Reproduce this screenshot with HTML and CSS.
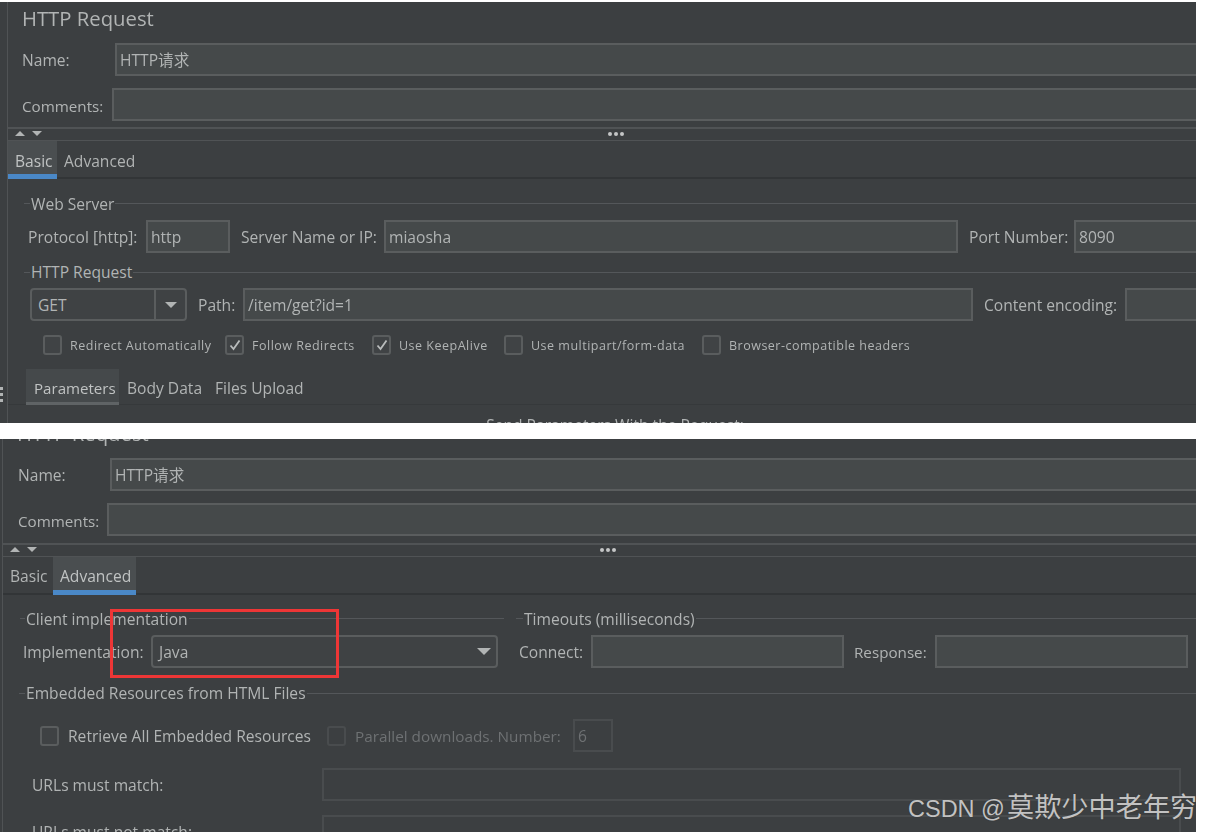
FILE: index.html
```html
<!DOCTYPE html>
<html lang="en">
<head>
<meta charset="utf-8">
<title>HTTP Request</title>
<link rel="stylesheet" href="styles.css">
</head>
<body>
<main class="page">
  <section class="panel panel-basic">
    <div class="grip"><i></i><i></i><i></i></div>
    <div class="inner">
      <h1 class="title">HTTP Request</h1>
      <div class="name-row">
        <label class="lbl">Name:</label>
        <div class="field open">HTTP请求</div>
      </div>
      <div class="comment-row">
        <label class="lbl">Comments:</label>
        <div class="field open"></div>
      </div>
      <div class="splitter">
        <svg class="arrows" width="28" height="7" viewBox="0 0 28 7"><path d="M0 6 5 1 10 6Z"/><path d="M17 1H27L22 6Z"/></svg>
        <div class="dots"><i></i><i></i><i></i></div>
      </div>
      <div class="tabs">
        <div class="tab active">Basic</div>
        <div class="tab">Advanced</div>
      </div>
      <div class="legend legend-server"><span>Web Server</span></div>
      <div class="server-row">
        <label class="lbl">Protocol [http]:</label>
        <div class="field">http</div>
        <label class="lbl lbl-gap">Server Name or IP:</label>
        <div class="field">miaosha</div>
        <label class="lbl lbl-gap">Port Number:</label>
        <div class="field open">8090</div>
      </div>
      <div class="legend legend-request"><span>HTTP Request</span></div>
      <div class="path-row">
        <div class="select method"><span class="select-value">GET</span><span class="select-btn"><svg width="12" height="6" viewBox="0 0 12 6"><path d="M0 0H12L6 6Z"/></svg></span></div>
        <label class="lbl lbl-gap">Path:</label>
        <div class="field">/item/get?id=1</div>
        <label class="lbl lbl-gap">Content encoding:</label>
        <div class="field open"></div>
      </div>
      <div class="checks">
        <div class="check check-a"><span class="box"></span>Redirect Automatically</div>
        <div class="check check-b"><span class="box"><svg width="14" height="14" viewBox="0 0 14 14"><path d="M2.5 7.5 5.5 11 11.5 2.5"/></svg></span>Follow Redirects</div>
        <div class="check check-c"><span class="box"><svg width="14" height="14" viewBox="0 0 14 14"><path d="M2.5 7.5 5.5 11 11.5 2.5"/></svg></span>Use KeepAlive</div>
        <div class="check check-d"><span class="box"></span>Use multipart/form-data</div>
        <div class="check"><span class="box"></span>Browser-compatible headers</div>
      </div>
      <div class="subtabs">
        <div class="subtab active">Parameters</div>
        <div class="subtab">Body Data</div>
        <div class="subtab">Files Upload</div>
      </div>
      <div class="send">Send Parameters With the Request:</div>
    </div>
  </section>

  <section class="panel panel-advanced">
    <div class="inner">
      <h1 class="title">HTTP Request</h1>
      <div class="name-row">
        <label class="lbl">Name:</label>
        <div class="field open">HTTP请求</div>
      </div>
      <div class="comment-row">
        <label class="lbl">Comments:</label>
        <div class="field open"></div>
      </div>
      <div class="splitter">
        <svg class="arrows" width="28" height="7" viewBox="0 0 28 7"><path d="M0 6 5 1 10 6Z"/><path d="M17 1H27L22 6Z"/></svg>
        <div class="dots"><i></i><i></i><i></i></div>
      </div>
      <div class="tabs">
        <div class="tab">Basic</div>
        <div class="tab active">Advanced</div>
      </div>
      <div class="legend-pair">
        <div class="legend"><span>Client implementation</span></div>
        <div class="legend"><span>Timeouts (milliseconds)</span></div>
      </div>
      <div class="impl-row">
        <label class="lbl">Implementation:</label>
        <div class="select"><span class="select-value">Java</span><svg class="java-arrow" width="14" height="7" viewBox="0 0 14 7"><path d="M0 0H14L7 7Z"/></svg></div>
        <label class="lbl lbl-wide">Connect:</label>
        <div class="field"></div>
        <label class="lbl lbl-response">Response:</label>
        <div class="field"></div>
      </div>
      <div class="legend legend-embedded"><span>Embedded Resources from HTML Files</span></div>
      <div class="retrieve-row">
        <div class="check check-large"><span class="box"></span>Retrieve All Embedded Resources</div>
        <div class="check check-large disabled"><span class="box"></span>Parallel downloads. Number:</div>
        <div class="field dim">6</div>
      </div>
      <div class="url-row">
        <label class="lbl">URLs must match:</label>
        <div class="field dim"></div>
      </div>
      <div class="url-row url-row-last">
        <label class="lbl">URLs must not match:</label>
        <div class="field dim"></div>
      </div>
    </div>
    <div class="highlight"></div>
    <div class="watermark">CSDN @<span class="watermark-cjk">莫欺少中老年穷</span></div>
  </section>
</main>
</body>
</html>
```
FILE: styles.css
```css
* { box-sizing: border-box; }
html, body { margin: 0; height: 100%; overflow: hidden; background: #fff; }
body {
  font-family: "Open Sans", "Noto Sans CJK SC", sans-serif;
  font-size: 15.6px;
  color: #b1b4b4;
}
.page { width: 1196px; padding-top: 2px; }
.panel { position: relative; overflow: hidden; background: #3c3f41; }
.panel-basic { height: 421px; padding-left: 7px; }
.panel-advanced { height: 393px; margin-top: 16px; padding-left: 2px; }
.inner { display: flow-root; height: 100%; border-left: 1px solid #505355; filter: blur(0.35px); }

.title { margin: 0 0 5px; height: 36px; line-height: 32px; padding-left: 14px; font-size: 20.3px; font-weight: 400; color: #b1b4b4; }
.panel-advanced .title { margin-top: -22px; }

.lbl { display: block; white-space: nowrap; line-height: 34px; }
.lbl-gap { padding-left: 11px; }
.lbl-wide { padding-left: 21px; }
.lbl-response { padding-left: 10px; font-size: 15.2px; }
.field {
  height: 33px; line-height: 31px; padding-left: 3px;
  background: #45494a; border: 2px solid #5a5d5e;
  white-space: nowrap; overflow: hidden;
}
.field.open { border-right: 0; }
.field.dim { background: transparent; border-color: #494c4e; color: #6e7173; }

.name-row, .comment-row { display: grid; height: 33px; }
.comment-row .lbl { line-height: 36px; font-size: 15.2px; }
.panel-basic .name-row { grid-template-columns: 93px 1fr; padding-left: 14px; }
.panel-basic .comment-row { grid-template-columns: 90px 1fr; padding-left: 14px; margin-top: 12px; }
.panel-advanced .name-row { grid-template-columns: 92px 1fr; padding-left: 15px; }
.panel-advanced .comment-row { grid-template-columns: 89px 1fr; padding-left: 15px; margin-top: 12px; }

.splitter {
  position: relative; height: 14px; margin-top: 6px;
  border-top: 2px solid #505355; border-bottom: 1px solid #505355;
}
.panel-advanced .splitter { margin-top: 7px; }
.arrows { display: block; position: absolute; left: 7px; top: 1px; fill: #b1b4b4; }
.dots { position: absolute; left: 600px; top: 3px; display: flex; gap: 2px; }
.panel-advanced .dots { left: 597px; }
.dots i { width: 4px; height: 4px; border-radius: 50%; background: #c4c6c6; }

.tabs { display: flex; height: 38px; border-bottom: 2px solid #323537; }
.tab { height: 38px; line-height: 38px; padding: 0 7px; white-space: nowrap; }
.panel-basic .tab { line-height: 40px; }
.panel-basic .tab:first-child { width: 49px; }
.panel-advanced .tab:first-child { width: 50px; }
.panel-advanced .tab.active { width: 83px; }
.tab.active { background: #4a4e50; border-bottom: 5px solid #4a88c7; color: #c0c3c3; }

.legend {
  display: flex; align-items: center; height: 20px; padding-left: 16px;
  background: linear-gradient(#54575a, #54575a) 16px 9px / 100% 1px no-repeat;
}
.legend span { margin-left: 6px; padding: 0 1px 2px; white-space: nowrap; background: #3c3f41; }
.legend-server span { padding-bottom: 0; }
.legend-server { margin-top: 15px; }
.legend-request { margin-top: 10px; }
.legend-embedded { margin-top: 16px; }

.server-row { display: grid; grid-template-columns: 118px 84px 154px 574px 116px 1fr; margin: 6px 0 0 20px; height: 33px; }
.path-row { display: grid; grid-template-columns: 157px 56px 730px 152px 1fr; margin: 5px 0 0 22px; height: 33px; }
.select {
  display: flex; align-items: center; height: 33px;
  border: 2px solid #5a5d5e; border-radius: 4px; background: #3f4244;
}
.select svg { fill: #b1b4b4; }
.java-arrow { margin-right: 5px; }
.select-value { flex: 1; padding-left: 6px; }
.select-btn { display: flex; align-items: center; justify-content: center; width: 31px; height: 100%; border-left: 2px solid #5a5d5e; }
.checks { display: flex; margin: 14px 0 0 35px; height: 20px; font-size: 12.5px; letter-spacing: 0.5px; }
.check { display: flex; align-items: center; white-space: nowrap; }
.box { display: flex; align-items: center; justify-content: center; width: 19px; height: 20px; margin-right: 8px; border: 2px solid #5a5d5e; border-radius: 3px; background: #404345; }
.box svg { fill: none; stroke: #b9bcbc; stroke-width: 1.8; }
.check-a { width: 182px; }
.check-b { width: 147px; }
.check-c { width: 132px; }
.check-d { width: 198px; }

.subtabs { display: flex; height: 36px; margin-top: 14px; padding-left: 18px; border-bottom: 1px solid #36393b; }
.subtab { height: 36px; line-height: 39px; white-space: nowrap; margin-right: 13px; }
.subtab.active { width: 93px; margin-right: 8px; padding-left: 8px; background: #45494b; border-bottom: 3px solid #5f6365; color: #c0c3c3; font-size: 15.1px; }
.send { margin-top: 10px; text-align: center; padding-left: 26px; line-height: 20px; white-space: nowrap; }

.grip { position: absolute; left: 0; top: 385px; display: flex; flex-direction: column; gap: 3px; }
.grip i { width: 3px; height: 3px; background: #b1b4b4; }

.legend-pair { display: grid; grid-template-columns: 484px 680px; column-gap: 12px; margin: 15px 0 0 17px; }
.legend-pair .legend { padding-left: 0; background-position: 0 8px; }
.legend-pair .legend:first-child span { margin-left: 5px; }
.legend-pair .legend:last-child span { margin-left: 7px; }
.impl-row { display: grid; grid-template-columns: 128px 347px 93px 253px 91px 253px; height: 33px; margin: 5px 0 0 20px; }
.retrieve-row { display: flex; align-items: center; height: 33px; margin: 15px 0 0 37px; }
.check-large { margin-right: 16px; }
.check-large .box { margin-right: 9px; background: #3f4244; }
.disabled { color: #6e7173; font-size: 15.3px; }
.disabled .box { border-color: #494c4e; background: transparent; }
.retrieve-row .field { width: 40px; margin-left: -4px; }
.url-row { display: grid; grid-template-columns: 290px 859px; height: 32px; margin: 16px 0 0 29px; }
.url-row-last { margin-top: 15px; }

.highlight { position: absolute; left: 110px; top: 170px; width: 229px; height: 69px; border: 3px solid #ee3636; }
.watermark {
  position: absolute; left: 908px; top: 355px; white-space: nowrap;
  font-family: "Liberation Sans", "Noto Sans CJK SC", sans-serif; font-size: 23.5px; line-height: 28px;
  color: #c2c2c2; text-shadow: 0 0 1px #2e2e2e;
}
.watermark-cjk { margin-left: 2px; font-size: 27.2px; }
```
